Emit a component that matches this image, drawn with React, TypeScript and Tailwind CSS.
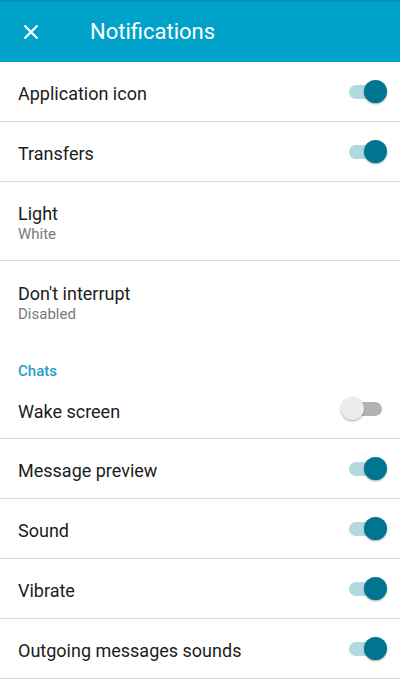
import React from "react";

function Toggle({ on }: { on: boolean }) {
  return (
    <div className="relative w-[40px] h-[24px] mr-[13px]">
      <div
        className={
          "absolute left-[2px] top-[5px] w-[33px] h-[14px] rounded-full " +
          (on ? "bg-[#b0d9e2]" : "bg-[#b3b3b3]")
        }
      />
      <div
        className={
          "absolute top-0 w-[23px] h-[23px] rounded-full shadow-[0_1px_2px_rgba(0,0,0,0.35)] " +
          (on ? "left-[17px] bg-[#00758f]" : "left-[-6px] bg-[#ececec]")
        }
      />
    </div>
  );
}

function Row({
  title,
  sub,
  toggle,
  h,
  border = true,
}: {
  title: string;
  sub?: string;
  toggle?: boolean;
  h: string;
  border?: boolean;
}) {
  return (
    <div
      className={
        "flex items-center justify-between pl-[18px] " +
        h +
        (border ? " border-b border-[#dadada]" : "")
      }
    >
      <div className="flex flex-col pt-[4px]">
        <span className="text-[18px] leading-[23px] text-[#1c1c1c]">{title}</span>
        {sub && (
          <span className="text-[15px] leading-[19px] text-[#7a7a7a]">{sub}</span>
        )}
      </div>
      {toggle !== undefined && <Toggle on={toggle} />}
    </div>
  );
}

export default function App() {
  return (
    <div
      className="w-[400px] h-[683px] bg-white overflow-hidden"
      style={{ fontFamily: "Roboto, 'Noto Sans', sans-serif" }}
    >
      <div className="h-[62px] bg-[#00a2c9] border-t-2 border-[#0090b3] flex items-center">
        <div className="w-[62px] flex justify-center">
          <svg width="16" height="16" viewBox="0 0 16 16">
            <path d="M1.5 1.5 L14.5 14.5 M14.5 1.5 L1.5 14.5" stroke="white" strokeWidth="2.2" />
          </svg>
        </div>
        <span className="ml-[28px] text-[22px] text-white leading-none">Notifications</span>
      </div>
      <Row title="Application icon" toggle={true} h="h-[60px]" />
      <Row title="Transfers" toggle={true} h="h-[60px]" />
      <Row title="Light" sub="White" h="h-[79px]" />
      <Row title="Don't interrupt" sub="Disabled" h="h-[79px]" border={false} />
      <div className="h-[40px] pl-[18px] pt-[19px]">
        <span className="text-[15px] leading-[20px] font-medium text-[#1fa0c9]">Chats</span>
      </div>
      <Row title="Wake screen" toggle={false} h="h-[59px]" />
      <Row title="Message preview" toggle={true} h="h-[60px]" />
      <Row title="Sound" toggle={true} h="h-[60px]" />
      <Row title="Vibrate" toggle={true} h="h-[60px]" />
      <Row title="Outgoing messages sounds" toggle={true} h="h-[60px]" />
    </div>
  );
}
